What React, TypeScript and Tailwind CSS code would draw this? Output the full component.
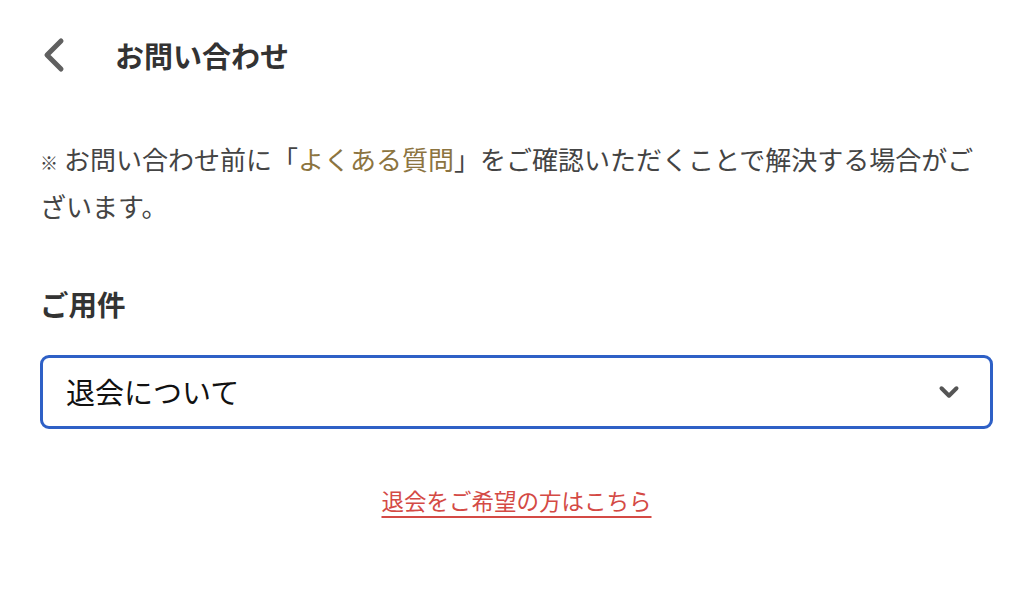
import { ChevronDown } from 'lucide-react';

const font = { fontFamily: '"Noto Sans CJK JP", "Noto Sans", sans-serif' };

function BackIcon() {
  return (
    <svg width="26" height="36" viewBox="0 0 26 36" fill="none">
      <path d="M21 4 L7 18 L21 32" stroke="currentColor" strokeWidth="5" strokeLinecap="round" strokeLinejoin="round" />
    </svg>
  );
}

export default function App() {
  return (
    <main className="min-h-screen w-full bg-white text-[#333]" style={font}>
      <header className="flex h-[110px] items-center pl-[40px]">
        <button className="flex h-[40px] w-[30px] items-center text-[#606060]">
          <BackIcon />
        </button>
        <h1 className="ml-[45px] text-[29px] font-bold leading-none text-[#333]">お問い合わせ</h1>
      </header>

      <div className="pl-[40px] pr-[31px] pt-[27px]">
        <p className="text-[26px] leading-[44px] text-[#444]">
          <span className="mr-[6px] text-[18px] font-bold">※</span>
          お問い合わせ前に「<a className="text-[#8c7440]">よくある質問</a>」をご確認いただくことで解決する場合がございます。
        </p>

        <h2 className="mt-[62px] text-[28.5px] font-bold leading-none text-[#333]">ご用件</h2>

        <div className="mt-[36px] flex h-[74px] items-center justify-between rounded-[9px] border-[3px] border-[#2e60c6] pl-[23px] pr-[26px]">
          <span className="text-[29px] leading-none text-[#111]">退会について</span>
          <ChevronDown size={30} strokeWidth={3.2} className="text-[#555]" />
        </div>

        <div className="mt-[60px] flex justify-center">
          <a className="text-[22.5px] leading-none text-[#d44a45] underline decoration-[2px] underline-offset-[6px]">
            退会をご希望の方はこちら
          </a>
        </div>
      </div>
    </main>
  );
}
